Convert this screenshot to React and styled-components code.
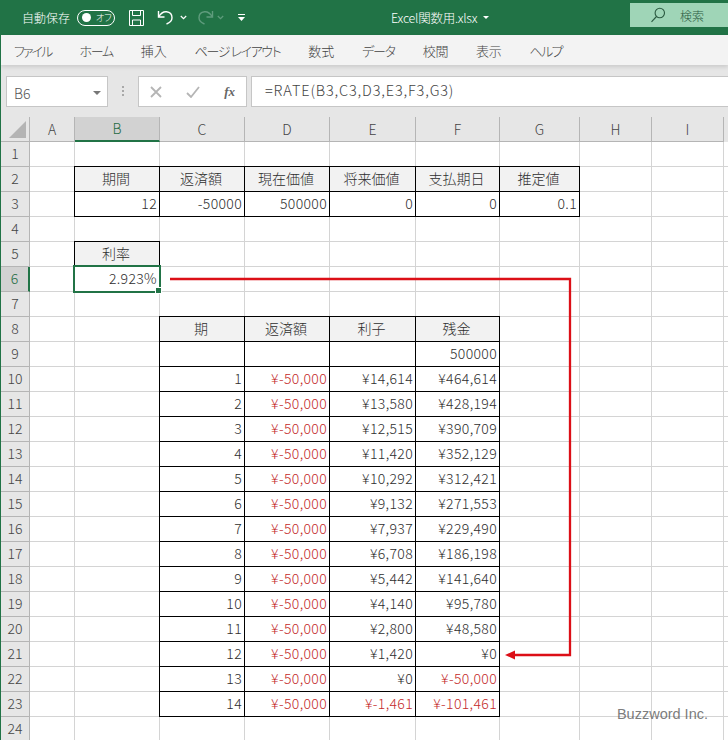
import React from 'react';
import styled, { createGlobalStyle } from 'styled-components';

const FONT = '"Noto Sans CJK JP", "Noto Sans", sans-serif';
const GREEN = '#217346';

const colNames = ['A', 'B', 'C', 'D', 'E', 'F', 'G', 'H', 'I'];
const headWidths = [45, 85, 85, 85, 86, 84, 80, 72, 72, 5];

// label, letter spacing
const menuItems = [
  ['ファイル', -1.9],
  ['ホーム', -1.3],
  ['挿入', 0],
  ['ページ レイアウト', -1.4],
  ['数式', 0],
  ['データ', -1.3],
  ['校閲', -0.3],
  ['表示', -0.3],
  ['ヘルプ', -1.6],
];

// r = 赤字
const r = (t) => ({ t, red: true });
const schedule = [
  [1, r('¥-50,000'), '¥14,614', '¥464,614'],
  [2, r('¥-50,000'), '¥13,580', '¥428,194'],
  [3, r('¥-50,000'), '¥12,515', '¥390,709'],
  [4, r('¥-50,000'), '¥11,420', '¥352,129'],
  [5, r('¥-50,000'), '¥10,292', '¥312,421'],
  [6, r('¥-50,000'), '¥9,132', '¥271,553'],
  [7, r('¥-50,000'), '¥7,937', '¥229,490'],
  [8, r('¥-50,000'), '¥6,708', '¥186,198'],
  [9, r('¥-50,000'), '¥5,442', '¥141,640'],
  [10, r('¥-50,000'), '¥4,140', '¥95,780'],
  [11, r('¥-50,000'), '¥2,800', '¥48,580'],
  [12, r('¥-50,000'), '¥1,420', '¥0'],
  [13, r('¥-50,000'), '¥0', r('¥-50,000')],
  [14, r('¥-50,000'), r('¥-1,461'), r('¥-101,461')],
];

// key is row:col, col 1 = B
const cells = {};
const put = (row, col, v, head) => {
  const o = v && v.t !== undefined ? v : { t: v };
  cells[`${row}:${col}`] = { ...o, box: true, head };
};
['期間', '返済額', '現在価値', '将来価値', '支払期日', '推定値'].forEach((t, i) => put(2, i + 1, t, true));
[12, -50000, 500000, 0, 0, 0.1].forEach((t, i) => put(3, i + 1, t));
put(5, 1, '利率', true);
put(6, 1, '2.923%');
['期', '返済額', '利子', '残金'].forEach((t, i) => put(8, i + 2, t, true));
['', '', '', 500000].forEach((t, i) => put(9, i + 2, t));
schedule.forEach((row, y) => row.forEach((t, i) => put(10 + y, i + 2, t)));

const rows = Array.from({ length: 24 }, (_, i) => i + 1);

const Global = createGlobalStyle`
  html, body { margin: 0; padding: 0; background: #fff; }
  body { font-family: ${FONT}; font-weight: 300; }
`;

const Page = styled.div`
  width: 728px;
  height: 740px;
  overflow: hidden;
  position: relative;
  display: flex;
  flex-direction: column;
  border-left: 1px solid ${GREEN};
  box-sizing: border-box;
`;

const TitleBar = styled.div`
  height: 35px;
  flex: none;
  background: ${GREEN};
  color: #fff;
  display: flex;
  align-items: center;
  padding-left: 21px;
  font-size: 12px;
`;

const AutoSave = styled.span`
  width: 55px;
`;

const Toggle = styled.span`
  width: 38px;
  height: 16px;
  box-sizing: border-box;
  border: 1px solid #fff;
  border-radius: 9px;
  display: flex;
  align-items: center;
  padding: 0 3px 0 4px;
  gap: 5px;
  font-size: 9px;
  white-space: nowrap;
  font-feature-settings: 'palt';
  margin-right: 13px;
  &::before {
    content: '';
    flex: none;
    width: 9px;
    height: 9px;
    border-radius: 50%;
    background: #fff;
  }
`;

const Qat = styled.span`
  display: flex;
  align-items: center;
  margin-right: ${(p) => p.$mr || 0}px;
`;

const Mirror = styled(Qat)`
  transform: scaleX(-1);
`;

const FileName = styled.span`
  margin-left: 146px;
  font-size: 12.5px;
  letter-spacing: -0.25px;
  display: flex;
  align-items: center;
  gap: 6px;
`;

const SearchBox = styled.div`
  margin-left: auto;
  margin-bottom: 5px;
  width: 98px;
  height: 24px;
  background: #9fd5b7;
  color: #2b5a41;
  display: flex;
  align-items: center;
  padding-left: 20px;
  gap: 14px;
  box-sizing: border-box;
  font-size: 12px;
`;

const Menu = styled.div`
  height: 30px;
  flex: none;
  background: #f3f3f3;
  display: flex;
  align-items: center;
  gap: 28px;
  padding-left: 13px;
  font-size: 13px;
  font-feature-settings: 'palt';
  color: #444;
  box-shadow: 0 2px 4px rgba(0, 0, 0, 0.12);
  z-index: 1;
  position: relative;
`;

const MenuItem = styled.span`
  letter-spacing: ${(p) => p.$ls}px;
`;

const FormulaRow = styled.div`
  height: 52px;
  flex: none;
  background: #e6e6e6;
  display: flex;
  align-items: center;
  padding: 1px 0 0 5px;
  box-sizing: border-box;
`;

const Field = styled.div`
  height: 31px;
  box-sizing: border-box;
  background: #fff;
  border: 1px solid #c6c6c6;
  display: flex;
  align-items: center;
`;

const NameBox = styled(Field)`
  width: 102px;
  padding: 2px 6px 0 7px;
  justify-content: space-between;
  font-size: 14px;
  color: #555;
`;

const Dots = styled.span`
  width: 30px;
  display: flex;
  justify-content: center;
`;

const FxBox = styled(Field)`
  width: 109px;
  margin-right: 4px;
  padding: 0 11px;
  justify-content: space-between;
`;

const FxLabel = styled.span`
  font-family: 'Liberation Serif', serif;
  font-style: italic;
  font-weight: bold;
  font-size: 13px;
  color: #666;
`;

const Formula = styled(Field)`
  flex: 1;
  padding: 0 0 4px 13px;
  font-size: 14.5px;
  letter-spacing: 0.85px;
  color: #444;
  border-right: none;
`;

const ColHeader = styled.div`
  height: 25px;
  flex: none;
  display: flex;
  background: #e6e6e6;
`;

const Corner = styled.div`
  width: 29px;
  flex: none;
  box-sizing: border-box;
  border-right: 1px solid #b5b5b5;
  border-bottom: 1px solid #b5b5b5;
  position: relative;
  &::after {
    content: '';
    position: absolute;
    right: 3px;
    bottom: 3px;
    border-style: solid;
    border-width: 0 0 17px 17px;
    border-color: transparent transparent #b4b4b4 transparent;
  }
`;

const ColCell = styled.div`
  width: ${(p) => p.$w}px;
  flex: none;
  box-sizing: border-box;
  display: flex;
  align-items: center;
  justify-content: center;
  padding-bottom: 1px;
  font-size: 14px;
  color: ${(p) => (p.$active ? '#1e6b41' : '#444')};
  background: ${(p) => (p.$active ? '#d2d2d2' : 'transparent')};
  border-right: 1px solid #b5b5b5;
  border-bottom: ${(p) => (p.$active ? `2px solid ${GREEN}` : '1px solid #b5b5b5')};
`;

const Sheet = styled.div`
  flex: 1;
  position: relative;
  overflow: hidden;
`;

const Row = styled.div`
  display: flex;
  height: 25px;
`;

const RowHead = styled.div`
  width: 29px;
  flex: none;
  box-sizing: border-box;
  display: flex;
  align-items: center;
  justify-content: center;
  padding-bottom: 2px;
  font-size: 14px;
  background: ${(p) => (p.$active ? '#d2d2d2' : '#e6e6e6')};
  color: ${(p) => (p.$active ? '#1e6b41' : '#444')};
  border-bottom: 1px solid #b5b5b5;
  border-right: ${(p) => (p.$active ? `2px solid ${GREEN}` : '1px solid #b5b5b5')};
`;

const Cell = styled.div`
  width: ${(p) => p.$w}px;
  flex: none;
  box-sizing: border-box;
  position: relative;
  display: flex;
  align-items: center;
  justify-content: ${(p) => (p.$head ? 'center' : 'flex-end')};
  padding: 0 2px 2px 0;
  font-size: 14px;
  letter-spacing: ${(p) => (p.$head ? '0' : '0.35px')};
  white-space: nowrap;
  color: ${(p) => (p.$red ? '#c42a2a' : '#2e2e2e')};
  background: ${(p) => (p.$head ? '#f2f2f2' : '#fff')};
  border-right: 1px solid ${(p) => (p.$box ? '#000' : '#d4d4d4')};
  border-bottom: 1px solid ${(p) => (p.$box ? '#000' : '#d4d4d4')};
  ${(p) => p.$box && 'box-shadow: -1px 0 0 #000, 0 -1px 0 #000, -1px -1px 0 #000; z-index: 1;'}
`;

const Selection = styled.span`
  position: absolute;
  inset: -2px -2px -2px -2px;
  border: 2px solid ${GREEN};
  pointer-events: none;
  &::after {
    content: '';
    position: absolute;
    right: -3px;
    bottom: -3px;
    width: 5px;
    height: 5px;
    background: ${GREEN};
    border: 1px solid #fff;
  }
`;

const ArrowLayer = styled.svg`
  position: absolute;
  left: -1px;
  top: -142px;
  z-index: 2;
  pointer-events: none;
`;

const Watermark = styled.div`
  position: absolute;
  right: 20px;
  bottom: 18px;
  z-index: 3;
  font-family: 'Liberation Sans', sans-serif;
  font-size: 14.5px;
  font-weight: 400;
  color: rgba(90, 90, 90, 0.8);
`;

const Triangle = styled.span`
  width: 0;
  height: 0;
  border-style: solid;
  border-width: ${(p) => p.$s}px ${(p) => p.$s}px 0;
  border-color: ${(p) => p.$c} transparent transparent;
`;

const SaveIcon = () => (
  <svg width="17" height="18" viewBox="0 0 17 18" fill="none" stroke="#fff" strokeWidth="1">
    <path d="M1.5 1.5h14v15h-14z" />
    <path d="M4.5 1.5v5h8v-5M4.5 16.5v-5.500h8v5.500" />
  </svg>
);

const UndoIcon = ({ color = '#fff' }) => (
  <svg width="17" height="17" viewBox="0 0 17 17" fill="none" stroke={color} strokeWidth="1.4">
    <path d="M1.500 2v6h6" />
    <path d="M1.800 7.600C4 4 6.500 2.500 9.500 2.800c3.500.4 5.500 3 5.500 6 0 3-2.500 5-5.500 6.200" />
  </svg>
);

const Caret = ({ color = '#fff' }) => (
  <svg width="7" height="5" viewBox="0 0 7 5" fill="none" stroke={color} strokeWidth="1.200">
    <path d="M.8 1l2.700 2.700L6.200 1" />
  </svg>
);

const SearchIcon = () => (
  <svg width="16" height="16" viewBox="0 0 16 16" fill="none" stroke="#2b5a41" strokeWidth="1.100">
    <circle cx="9.800" cy="6" r="4.700" />
    <path d="M6.500 9.500L1.500 14.800" />
  </svg>
);

export default function App() {
  return (
    <Page>
      <Global />
      <TitleBar>
        <AutoSave>自動保存</AutoSave>
        <Toggle>オフ</Toggle>
        <Qat $mr={12}><SaveIcon /></Qat>
        <Qat $mr={6}><UndoIcon /></Qat>
        <Qat $mr={10}><Caret /></Qat>
        <Mirror $mr={3}><UndoIcon color="#5f9c7d" /></Mirror>
        <Qat $mr={14}><Caret color="#5f9c7d" /></Qat>
        <Qat>
          <svg width="7" height="7" viewBox="0 0 7 7" fill="#fff">
            <path d="M0 0h7v1H0zM0 3h7L3.500 7z" />
          </svg>
        </Qat>
        <FileName>
          Excel関数用.xlsx
          <Triangle $s={3} $c="#fff" />
        </FileName>
        <SearchBox>
          <SearchIcon />
          検索
        </SearchBox>
      </TitleBar>
      <Menu>
        {menuItems.map(([label, ls]) => (
          <MenuItem key={label} $ls={ls}>{label}</MenuItem>
        ))}
      </Menu>
      <FormulaRow>
        <NameBox>
          B6
          <Triangle $s={4} $c="#777" />
        </NameBox>
        <Dots>
          <svg width="3" height="11" viewBox="0 0 3 11" fill="#a8a8a8">
            <path d="M0 0h2v2H0zM0 4h2v2H0zM0 8h2v2H0z" />
          </svg>
        </Dots>
        <FxBox>
          <svg width="12" height="12" viewBox="0 0 12 12" fill="none" stroke="#b5b5b5" strokeWidth="1.800">
            <path d="M1 1l10 10M11 1L1 11" />
          </svg>
          <svg width="14" height="12" viewBox="0 0 14 12" fill="none" stroke="#b5b5b5" strokeWidth="1.800">
            <path d="M1 7l4 4 8-10" />
          </svg>
          <FxLabel>fx</FxLabel>
        </FxBox>
        <Formula>=RATE(B3,C3,D3,E3,F3,G3)</Formula>
      </FormulaRow>
      <ColHeader>
        <Corner />
        {colNames.map((c, i) => (
          <ColCell key={c} $w={headWidths[i]} $active={c === 'B'}>{c}</ColCell>
        ))}
      </ColHeader>
      <Sheet>
        {rows.map((y) => (
          <Row key={y}>
            <RowHead $active={y === 6}>{y}</RowHead>
            {headWidths.map((w, x) => {
              const c = cells[`${y}:${x}`];
              return (
                <Cell key={x} $w={w} $box={c && c.box} $head={c && c.head} $red={c && c.red}>
                  {c && c.t}
                  {y === 6 && x === 1 && <Selection />}
                </Cell>
              );
            })}
          </Row>
        ))}
        <ArrowLayer width="728" height="740" viewBox="0 0 728 740" fill="none">
          <path d="M170 279H570V655H512" stroke="#dc0f17" strokeWidth="2.300" />
          <path d="M505 655l10-4.500v9z" fill="#dc0f17" />
        </ArrowLayer>
        <Watermark>Buzzword Inc.</Watermark>
      </Sheet>
    </Page>
  );
}
